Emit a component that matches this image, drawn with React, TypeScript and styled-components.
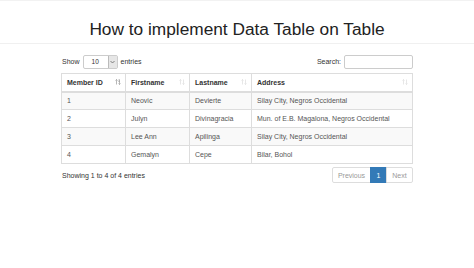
import styled, { createGlobalStyle } from 'styled-components';

const GlobalStyle = createGlobalStyle`
  html, body {
    margin: 0;
    padding: 0;
    background: #fff;
  }
  body {
    font-family: 'Liberation Sans', Arial, sans-serif;
    color: #333;
  }
`;

const members = [
  { id: 1, first: 'Neovic', last: 'Devierte', address: 'Silay City, Negros Occidental' },
  { id: 2, first: 'Julyn', last: 'Divinagracia', address: 'Mun. of E.B. Magalona, Negros Occidental' },
  { id: 3, first: 'Lee Ann', last: 'Apilinga', address: 'Silay City, Negros Occidental' },
  { id: 4, first: 'Gemalyn', last: 'Cepe', address: 'Bilar, Bohol' },
];

const columns = [
  { label: 'Member ID', width: 64, sorted: true },
  { label: 'Firstname', width: 64, sorted: false },
  { label: 'Lastname', width: 62, sorted: false },
  { label: 'Address', width: undefined, sorted: false },
];

const Page = styled.div`
  border-top: 1px solid #f2f2f2;
`;

const Header = styled.header`
  height: 42px;
  border-bottom: 1px solid #f0f0f0;
  display: flex;
  align-items: flex-end;
  justify-content: center;
`;

const Title = styled.h1`
  margin: 0 0 3px;
  font-size: 17.3px;
  font-weight: 400;
  color: #222;
  line-height: 22px;
`;

const Container = styled.main`
  width: 352px;
  margin: 0 auto;
  padding-top: 10px;
`;

const Controls = styled.div`
  display: flex;
  justify-content: space-between;
  align-items: center;
  height: 15px;
  font-size: 7px;
`;

const Label = styled.label`
  display: flex;
  align-items: center;
  gap: 3px;
  padding-left: 1px;
`;

const Select = styled.div`
  width: 35px;
  height: 14px;
  border: 1px solid #ccc;
  border-radius: 2px;
  display: flex;
  align-items: center;
  justify-content: space-between;
  box-sizing: border-box;
  padding-left: 8px;
  font-size: 6.5px;
`;

const Caret = styled.span`
  width: 8px;
  height: 12px;
  background: #e6e6e6;
  border-left: 1px solid #bbb;
  display: flex;
  align-items: center;
  justify-content: center;
`;

const SearchInput = styled.input`
  width: 69px;
  height: 14px;
  box-sizing: border-box;
  border: 1px solid #ccc;
  border-radius: 2px;
  padding: 0 3px;
  font-size: 7px;
  outline: none;
`;

const Table = styled.table`
  width: 100%;
  border-collapse: collapse;
  margin-top: 4px;
  font-size: 7px;
  border: 1px solid #ddd;
`;

const Th = styled.th<{ $w?: number }>`
  width: ${({ $w }) => ($w ? `${$w}px` : 'auto')};
  height: 18px;
  box-sizing: border-box;
  padding: 0 4px 0 5px;
  text-align: left;
  font-weight: 700;
  border: 1px solid #ddd;
  border-bottom: 2px solid #ddd;
  color: #333;
`;

const ThInner = styled.div`
  display: flex;
  align-items: center;
  justify-content: space-between;
`;

const Tr = styled.tr<{ $striped: boolean }>`
  background: ${({ $striped }) => ($striped ? '#f9f9f9' : '#fff')};
`;

const Td = styled.td`
  height: 18px;
  box-sizing: border-box;
  padding: 0 5px;
  border: 1px solid #ddd;
  color: #555;
`;

const Footer = styled.div`
  display: flex;
  justify-content: space-between;
  align-items: center;
  margin-top: 3px;
  font-size: 7px;
`;

const Info = styled.div`
  padding-left: 1px;
`;

const Pagination = styled.div`
  display: flex;
`;

const PageBtn = styled.span<{ $active?: boolean; $w: number }>`
  width: ${({ $w }) => $w}px;
  height: 16px;
  box-sizing: border-box;
  display: flex;
  align-items: center;
  justify-content: center;
  border: 1px solid ${({ $active }) => ($active ? '#337ab7' : '#ddd')};
  background: ${({ $active }) => ($active ? '#337ab7' : '#fff')};
  color: ${({ $active }) => ($active ? '#fff' : '#999')};
  margin-left: -1px;
  &:first-child {
    border-radius: 2px 0 0 2px;
  }
  &:last-child {
    border-radius: 0 2px 2px 0;
  }
`;

const SortIcon = ({ active }: { active: boolean }) => (
  <svg width="6" height="6" viewBox="0 0 12 12">
    <path d="M3 11V1M1 3l2-2 2 2" stroke={active ? '#999' : '#ddd'} strokeWidth="1.4" fill="none" />
    <path d="M9 1v10M7 9l2 2 2-2" stroke={active ? '#999' : '#ddd'} strokeWidth="1.4" fill="none" />
    {active && <path d="M6.5 2h3M6.5 5h3" stroke="#999" strokeWidth="1.2" />}
  </svg>
);

export default function App() {
  return (
    <Page>
      <GlobalStyle />
      <Header>
        <Title>How to implement Data Table on Table</Title>
      </Header>
      <Container>
        <Controls>
          <Label>
            Show
            <Select>
              10
              <Caret>
                <svg width="5" height="4" viewBox="0 0 10 8">
                  <path d="M1 2l4 4 4-4" stroke="#666" strokeWidth="1.6" fill="none" />
                </svg>
              </Caret>
            </Select>
            entries
          </Label>
          <Label>
            Search:
            <SearchInput type="text" />
          </Label>
        </Controls>
        <Table>
          <thead>
            <tr>
              {columns.map((c) => (
                <Th key={c.label} $w={c.width}>
                  <ThInner>
                    {c.label}
                    <SortIcon active={c.sorted} />
                  </ThInner>
                </Th>
              ))}
            </tr>
          </thead>
          <tbody>
            {members.map((m, i) => (
              <Tr key={m.id} $striped={i % 2 === 0}>
                <Td>{m.id}</Td>
                <Td>{m.first}</Td>
                <Td>{m.last}</Td>
                <Td>{m.address}</Td>
              </Tr>
            ))}
          </tbody>
        </Table>
        <Footer>
          <Info>Showing 1 to 4 of 4 entries</Info>
          <Pagination>
            <PageBtn $w={39}>Previous</PageBtn>
            <PageBtn $w={17} $active>1</PageBtn>
            <PageBtn $w={27}>Next</PageBtn>
          </Pagination>
        </Footer>
      </Container>
    </Page>
  );
}
